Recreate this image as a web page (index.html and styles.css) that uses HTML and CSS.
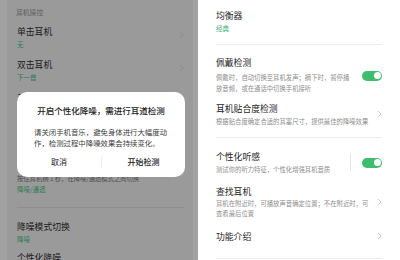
FILE: index.html
```html
<!DOCTYPE html>
<html lang="zh-CN">
<head>
    <meta charset="UTF-8">
    <meta name="viewport" content="width=device-width, initial-scale=1.0">
    <title>耳机设置</title>
    <link rel="stylesheet" href="styles.css">
</head>
<body>

<div class="screens">

    <!-- Left screen: dimmed list with dialog on top -->
    <div class="screen screen-dim">
        <div class="card">
            <div class="group-label">耳机操控</div>

            <div class="item">
                <div class="item-text">
                    <div class="item-title">单击耳机</div>
                    <div class="item-value">无</div>
                </div>
                <svg class="chevron" width="5" height="8" viewBox="0 0 5 8"><polyline points="1,1 4,4 1,7" fill="none" stroke="#8c8c8c" stroke-width="1"/></svg>
            </div>

            <div class="item">
                <div class="item-text">
                    <div class="item-title">双击耳机</div>
                    <div class="item-value">下一首</div>
                </div>
                <svg class="chevron" width="5" height="8" viewBox="0 0 5 8"><polyline points="1,1 4,4 1,7" fill="none" stroke="#8c8c8c" stroke-width="1"/></svg>
            </div>

            <div class="item">
                <div class="item-text">
                    <div class="item-title">三击耳机</div>
                    <div class="item-value">上一首</div>
                </div>
            </div>

            <div class="item item-long">
                <div class="item-text">
                    <div class="item-title">长按耳机</div>
                    <div class="item-desc">按住耳机柄 1 秒，在降噪/通透模式之间切换</div>
                    <div class="item-value item-value-small">降噪/通透</div>
                </div>
            </div>

            <div class="item item-mode">
                <div class="item-text">
                    <div class="item-title">降噪模式切换</div>
                    <div class="item-value">降噪</div>
                </div>
            </div>

            <div class="item item-last">
                <div class="item-text">
                    <div class="item-title">个性化降噪</div>
                </div>
            </div>
        </div>

        <div class="dialog">
            <div class="dialog-title">开启个性化降噪，需进行耳道检测</div>
            <div class="dialog-body">请关闭手机音乐，避免身体进行大幅度动作，检测过程中降噪效果会持续变化。</div>
            <div class="dialog-actions">
                <div class="dialog-btn">取消</div>
                <div class="dialog-btn dialog-btn-main">开始检测</div>
            </div>
        </div>
    </div>

    <!-- Right screen -->
    <div class="screen screen-light">
        <div class="row row-eq">
            <div class="row-text">
                <div class="row-title">均衡器</div>
                <div class="row-value">经典</div>
            </div>
        </div>

        <div class="row row-wear">
            <div class="row-text row-text-short">
                <div class="row-title">佩戴检测</div>
                <div class="row-desc">佩戴时，自动切换至耳机发声；摘下时，暂停播放音频，或在通话中切换手机接听</div>
            </div>
            <div class="toggle"><span class="knob"></span></div>
        </div>

        <div class="row row-fit">
            <div class="row-text">
                <div class="row-title">耳机贴合度检测</div>
                <div class="row-desc">根据贴合度确定合适的耳塞尺寸，提供最佳的降噪效果</div>
            </div>
            <svg class="chevron" width="5" height="8" viewBox="0 0 5 8"><polyline points="1,1 4,4 1,7" fill="none" stroke="#c9c9c9" stroke-width="1"/></svg>
        </div>

        <div class="row row-hear">
            <div class="row-text row-text-short">
                <div class="row-title">个性化听感</div>
                <div class="row-desc">测试你的听力特征，个性化增强耳机音质</div>
            </div>
            <span class="vline"></span>
            <div class="toggle"><span class="knob"></span></div>
        </div>

        <div class="row row-find">
            <div class="row-text">
                <div class="row-title">查找耳机</div>
                <div class="row-desc row-desc-tight">耳机在附近时，可播放声音确定位置；不在附近时，可查看最后位置</div>
            </div>
            <svg class="chevron" width="5" height="8" viewBox="0 0 5 8"><polyline points="1,1 4,4 1,7" fill="none" stroke="#c9c9c9" stroke-width="1"/></svg>
        </div>

        <div class="row row-intro">
            <div class="row-text">
                <div class="row-title">功能介绍</div>
            </div>
            <svg class="chevron" width="5" height="8" viewBox="0 0 5 8"><polyline points="1,1 4,4 1,7" fill="none" stroke="#c9c9c9" stroke-width="1"/></svg>
        </div>
    </div>

</div>

</body>
</html>
```

FILE: styles.css
```css
body {
    margin: 0;
    width: 400px;
    height: 260px;
    overflow: hidden;
    font-family: "Noto Sans CJK SC", "Noto Sans", sans-serif;
    background-color: #ffffff;
}
.screens {
    display: flex;
    height: 260px;
}
.screen {
    height: 260px;
    overflow: hidden;
}

/* left, dimmed screen */
.screen-dim {
    position: relative;
    width: 198px;
    background-color: #a1a1a1;
}
.card {
    margin: 0 5px 0 7px;
    height: 260px;
    background-color: #9a9a9a;
}
.group-label {
    height: 22px;
    padding: 6px 0 0 9px;
    box-sizing: border-box;
    font-size: 6.8px;
    line-height: 12px;
    color: #5a5a5a;
}
.item {
    display: flex;
    align-items: center;
    margin: 0 9px 0 10px;
    padding: 4px 0 5px;
}
.item-text {
    flex: 1;
}
.item-title {
    font-size: 8.8px;
    line-height: 12px;
    color: #1b1b1b;
}
.item-value {
    font-size: 6.5px;
    line-height: 12px;
    color: #2f7a52;
}
.item-desc {
    font-size: 6.3px;
    line-height: 10px;
    color: #4f4f4f;
}
.item-value-small {
    line-height: 10px;
}
.item .chevron {
    padding-bottom: 6px;
}
.item-long {
    padding-top: 41px;
    padding-bottom: 13px;
    border-bottom: 1px solid #8e8e8e;
}
.item-mode {
    padding-top: 13px;
    padding-bottom: 3px;
}
.item-last {
    padding-top: 4px;
}

/* dialog */
.dialog {
    position: absolute;
    left: 17px;
    top: 92px;
    width: 168px;
    height: 85px;
    box-sizing: border-box;
    padding-top: 12px;
    background-color: #ffffff;
    border-radius: 10px;
}
.dialog-title {
    text-align: center;
    font-size: 8.5px;
    line-height: 12px;
    font-weight: 500;
    color: #1a1a1a;
}
.dialog-body {
    margin-top: 9.5px;
    padding: 0 17px 0 17px;
    font-size: 7.4px;
    line-height: 11px;
    color: #3d3d3d;
}
.dialog-actions {
    display: grid;
    grid-template-columns: 1fr 1fr;
    margin-top: 8.5px;
}
.dialog-btn {
    text-align: center;
    font-size: 8px;
    line-height: 12px;
    color: #222222;
}
.dialog-btn-main {
    border-left: 1px solid #f0f0f0;
    font-weight: 500;
}

/* right screen */
.screen-light {
    width: 202px;
    background-color: #ffffff;
}
.row {
    display: flex;
    align-items: center;
    margin: 0 18px;
}
.row-text {
    width: 156px;
}
.row-text-short {
    width: 136px;
}
.row-title {
    font-size: 8.8px;
    line-height: 12px;
    color: #1e1e1e;
}
.row-value {
    font-size: 6.5px;
    line-height: 12px;
    color: #3fb47a;
}
.row-desc {
    margin-top: 0.5px;
    font-size: 6.35px;
    line-height: 11px;
    color: #8d8d8d;
}
.row-desc-tight {
    margin-top: 1px;
    line-height: 10px;
}
.row .chevron {
    margin-left: auto;
    padding-bottom: 2px;
}
.row-eq {
    padding: 10px 0;
    border-bottom: 1px solid #ededed;
}
.row-wear {
    padding-top: 12px;
}
.row-wear .row-desc {
    margin-top: 3px;
}
.row-fit {
    padding-top: 9px;
    padding-bottom: 10.5px;
    border-bottom: 1px solid #ededed;
}
.row-hear {
    padding-top: 13px;
}
.row-find {
    padding-top: 11.5px;
}
.row-intro {
    padding-top: 12px;
    padding-bottom: 15px;
    border-bottom: 1px solid #ededed;
}
.toggle {
    margin-left: auto;
    width: 20px;
    height: 10px;
    border-radius: 5px;
    background-color: #3dbd6d;
    display: flex;
    align-items: center;
    justify-content: flex-end;
    padding: 0 1.5px;
    box-sizing: border-box;
}
.knob {
    width: 7px;
    height: 7px;
    border-radius: 50%;
    background-color: #ffffff;
}
.vline {
    margin-left: auto;
    width: 1px;
    height: 17px;
    background-color: #e6e6e6;
}
.vline + .toggle {
    margin-left: 11px;
}
```
